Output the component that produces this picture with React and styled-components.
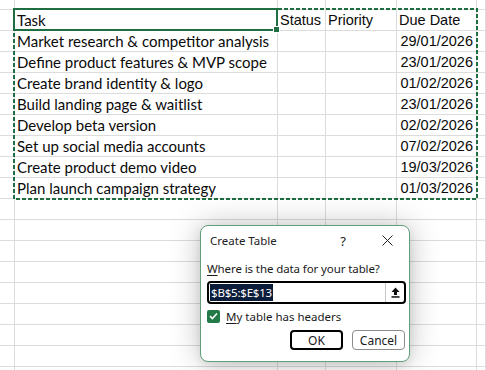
import styled, { createGlobalStyle } from 'styled-components'

const GlobalStyle = createGlobalStyle`
  html, body {
    margin: 0;
    padding: 0;
    background: #ffffff;
  }
  body {
    overflow: hidden;
  }
`;

const GREEN = '#1e6e41';
const GRID = '#dcdcdc';

const tasks = [
  ['Market research & competitor analysis', '29/01/2026'],
  ['Define product features & MVP scope', '23/01/2026'],
  ['Create brand identity & logo', '01/02/2026'],
  ['Build landing page & waitlist', '23/01/2026'],
  ['Develop beta version', '02/02/2026'],
  ['Set up social media accounts', '07/02/2026'],
  ['Create product demo video', '19/03/2026'],
  ['Plan launch campaign strategy', '01/03/2026'],
];

const Page = styled.div`
  position: relative;
  width: 486px;
  height: 370px;
  overflow: hidden;
  background: #ffffff;
`;

const Sheet = styled.div`
  display: grid;
  grid-template-columns: 15px 263px 48px 71px 80px 1fr;
  grid-template-rows: 10px;
  grid-auto-rows: 21px;
`;

const Cell = styled.div`
  box-sizing: border-box;
  border-right: 1px solid ${GRID};
  border-bottom: 1px solid ${GRID};
  display: flex;
  align-items: flex-end;
  justify-content: ${(p) => (p.$align === 'right' ? 'flex-end' : 'flex-start')};
  padding: 0 ${(p) => (p.$align === 'right' ? '3px' : '0')} 1px ${(p) => (p.$align === 'right' ? '0' : '2px')};
  font-family: ${(p) => (p.$task ? '"Lato", "Liberation Sans", sans-serif' : '"Liberation Sans", Arial, sans-serif')};
  font-size: ${(p) => (p.$task ? '15px' : '14.5px')};
  line-height: 18px;
  color: #0a0a0a;
  white-space: nowrap;
  overflow: visible;
`;

const Selection = styled.svg`
  position: absolute;
  left: 13px;
  top: 8px;
  pointer-events: none;
`;

const ActiveCell = styled.div`
  position: absolute;
  left: 13px;
  top: 8px;
  width: 265px;
  height: 23px;
  box-sizing: border-box;
  border: 2px solid ${GREEN};
  pointer-events: none;

  &::after {
    content: '';
    position: absolute;
    right: -4px;
    bottom: -4px;
    width: 5px;
    height: 5px;
    background: ${GREEN};
    border: 1px solid #ffffff;
  }
`;

const Dialog = styled.div`
  position: absolute;
  left: 200px;
  top: 225px;
  width: 210px;
  height: 137px;
  box-sizing: border-box;
  background: #ffffff;
  border: 1px solid #5f9e78;
  border-radius: 8px;
  box-shadow: 0 0 30px rgba(0, 0, 0, 0.25), 0 4px 10px rgba(0, 0, 0, 0.08);
  font-family: "Noto Sans", "Open Sans", sans-serif;
  font-size: 11.5px;
  color: #1a1a1a;
  display: flex;
  flex-direction: column;
`;

const TitleBar = styled.div`
  height: 29px;
  display: flex;
  align-items: center;
  padding: 0 0 0 9px;
`;

const Title = styled.div`
  flex: 1;
  font-size: 11.5px;
  color: #222222;
`;

const TitleButton = styled.div`
  width: 44px;
  height: 29px;
  display: flex;
  align-items: center;
  justify-content: center;
  font-size: 13px;
  color: #222222;
`;

const Body = styled.div`
  display: flex;
  flex-direction: column;
  padding: 6px 3px 0 6px;
`;

const Label = styled.div`
  line-height: 16px;
  height: 16px;
  margin-bottom: 4px;
  letter-spacing: -0.1px;

  u {
    text-underline-offset: 2px;
  }
`;

const RangeField = styled.div`
  width: 199px;
  height: 23px;
  box-sizing: border-box;
  border: 2px solid #000000;
  border-radius: 4px;
  display: flex;
  align-items: center;
`;

const RangeText = styled.div`
  flex: 1;
  display: flex;
  align-items: center;
  padding-left: 1px;
`;

const Selected = styled.span`
  background: #0b1d3a;
  color: #ffffff;
  line-height: 17px;
  padding: 0 1px;
  letter-spacing: -0.2px;
`;

const RangeButton = styled.div`
  width: 18px;
  height: 100%;
  border-left: 1px solid #c8c8c8;
  display: flex;
  align-items: center;
  justify-content: center;
`;

const CheckRow = styled.label`
  display: flex;
  align-items: center;
  gap: 6px;
  margin-top: 5px;
  height: 14px;

  u {
    text-underline-offset: 2px;
  }
`;

const CheckBox = styled.span`
  width: 13px;
  height: 13px;
  border-radius: 2px;
  background: #217a47;
  display: flex;
  align-items: center;
  justify-content: center;
`;

const ButtonRow = styled.div`
  display: flex;
  justify-content: flex-end;
  gap: 9px;
  margin-top: 7px;
  padding-right: 1px;
`;

const Button = styled.div`
  width: 53px;
  height: 20px;
  box-sizing: border-box;
  border: ${(p) => (p.$primary ? '2px solid #000000' : '1px solid #8c8c8c')};
  border-radius: 4px;
  display: flex;
  align-items: center;
  justify-content: center;
  font-size: 12px;
  color: #1a1a1a;
  background: #ffffff;
`;

function CloseIcon() {
  return (
    <svg width="11" height="11" viewBox="0 0 11 11">
      <path d="M0.5 0.5 L10.5 10.5 M10.5 0.5 L0.5 10.5" stroke="#222" strokeWidth="1" fill="none" />
    </svg>
  );
}

function CollapseIcon() {
  return (
    <svg width="9" height="11" viewBox="0 0 9 11">
      <path d="M4.5 0.5 L8.5 5 H6 V8 H3 V5 H0.5 Z" fill="#111" />
      <rect x="0.5" y="9.2" width="8" height="1.5" fill="#111" />
    </svg>
  );
}

function CheckIcon() {
  return (
    <svg width="9" height="8" viewBox="0 0 9 8">
      <path d="M1 4.2 L3.4 6.5 L8 1.5" stroke="#fff" strokeWidth="1.6" fill="none" />
    </svg>
  );
}

export default function App() {
  const rows = [
    ['', '', '', '', ''],
    ['', 'Task', 'Status', 'Priority', 'Due Date'],
    ...tasks.map(([t, d]) => ['', t, '', '', d]),
    ...Array.from({ length: 9 }, () => ['', '', '', '', '']),
  ];

  return (
    <Page>
      <GlobalStyle />
      <Sheet>
        {rows.map((r, i) =>
          [...r, ''].map((v, j) => (
            <Cell
              key={`${i}-${j}`}
              $task={j === 1 && i > 0}
              $align={j === 4 && i > 1 ? 'right' : 'left'}
            >
              {v}
            </Cell>
          ))
        )}
      </Sheet>

      <Selection width="465" height="192" viewBox="0 0 465 192">
        <rect x="1" y="1" width="463" height="190" fill="none" stroke={GREEN} strokeWidth="2" strokeDasharray="4 2" />
      </Selection>
      <ActiveCell />

      <Dialog>
        <TitleBar>
          <Title>Create Table</Title>
          <TitleButton>?</TitleButton>
          <TitleButton>
            <CloseIcon />
          </TitleButton>
        </TitleBar>
        <Body>
          <Label>
            <u>W</u>here is the data for your table?
          </Label>
          <RangeField>
            <RangeText>
              <Selected>$B$5:$E$13</Selected>
            </RangeText>
            <RangeButton>
              <CollapseIcon />
            </RangeButton>
          </RangeField>
          <CheckRow>
            <CheckBox>
              <CheckIcon />
            </CheckBox>
            <span>
              <u>M</u>y table has headers
            </span>
          </CheckRow>
          <ButtonRow>
            <Button $primary>OK</Button>
            <Button>Cancel</Button>
          </ButtonRow>
        </Body>
      </Dialog>
    </Page>
  );
}
